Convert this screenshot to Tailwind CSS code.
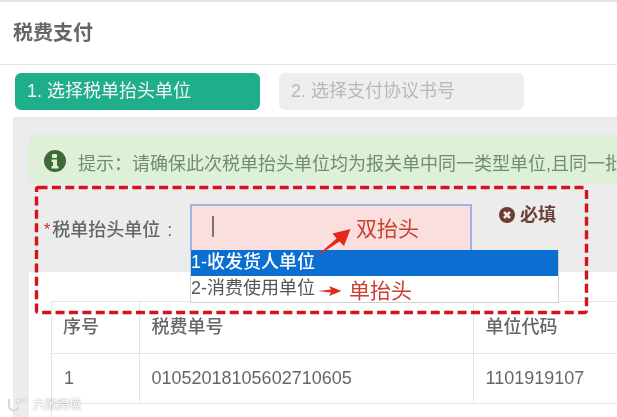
<!DOCTYPE html>
<html lang="zh">
<head>
    <meta charset="UTF-8">
    <title>税费支付</title>
    <script src="https://cdn.jsdelivr.net/npm/@tailwindcss/browser@4"></script>
</head>
<body class="bg-white overflow-hidden font-['Liberation_Sans','Noto_Sans_CJK_SC',sans-serif]">
    <div class="relative w-[617px] h-[417px] overflow-hidden blur-[0.4px]">
        <!-- Header -->
        <div class="h-[65px] border-t-2 border-b border-t-[#e4e4e4] border-b-[#e5e5e5] pl-[13px] flex items-center">
            <h1 class="text-[20px] font-bold text-[#666]">税费支付</h1>
        </div>

        <!-- Steps -->
        <div class="flex gap-[19px] pl-[15px] pt-[8px] h-[52px]">
            <div class="w-[245px] h-[37px] rounded-md bg-[#1fae8c] text-[#f4f4f4] text-[18px] pl-[12px] flex items-center">1. 选择税单抬头单位</div>
            <div class="w-[245px] h-[37px] rounded-md bg-[#eeeeee] text-[#b8b8b8] text-[18px] pl-[12px] flex items-center">2. 选择支付协议书号</div>
        </div>

        <!-- Panel -->
        <div class="ml-[13px] h-[300px] bg-[#ececec] pl-[16px] pt-[17px] flex flex-col">
            <div class="h-[50px] shrink-0 bg-[#dff0d8] rounded-tl-md flex items-center pl-[15px] pt-[10px] text-[18px] text-[#6f8f68] whitespace-nowrap overflow-hidden">
                <svg class="w-[22px] h-[22px] shrink-0 mr-[12px] mb-[6px]" viewBox="0 0 22 22">
                    <circle cx="11" cy="11" r="11" fill="#3d6b35"/>
                    <rect x="8" y="4" width="5" height="4" rx="1" fill="#dff0d8"/>
                    <path d="M7.500 9.500h5.500v6.500h1.500v2.500h-7v-2.500h1.500v-4h-1.500z" fill="#dff0d8"/>
                </svg>
                提示：请确保此次税单抬头单位均为报关单中同一类型单位,且同一批
            </div>

            <!-- Form row -->
            <div class="h-[88px] shrink-0 flex pl-[15px] pt-[20px]">
                <div class="w-[146px] h-[46px] pt-[6px] flex items-center text-[18px] font-medium text-[#666] whitespace-nowrap">
                    <span class="text-[#c0262d] mr-[2px] text-[16px]">*</span>税单抬头单位<span class="ml-[7px]">:</span>
                </div>
                <div class="w-[282px] h-[46px] bg-[#fbdfdf] border-2 border-b-0 border-[#a3b3e3] pl-[20px] pt-[10px]">
                    <div class="w-[2px] h-[21px] bg-[#777]"></div>
                </div>
                <div class="ml-[27px] h-[22px] flex items-center text-[18px] font-bold text-[#6a3f38]">
                    <svg class="w-[16px] h-[16px] mr-[5px]" viewBox="0 0 16 16">
                        <circle cx="8" cy="8" r="8" fill="#6e3b35"/>
                        <path d="M5 5l6 6M11 5l-6 6" stroke="#f0e6e4" stroke-width="2.600"/>
                    </svg>
                    必填
                </div>
            </div>

            <!-- White content with table -->
            <div class="flex-1 bg-white pl-[22px] pt-[29px]">
                <div class="h-full border-l border-[#e5e5e5]">
                    <table class="border-collapse w-[700px] text-[18px] text-[#666] table-fixed">
                        <tbody>
                            <tr class="h-[52px] border-y border-[#e5e5e5] font-medium">
                                <td class="w-[87px] pl-[11px] border-r border-[#e5e5e5]">序号</td>
                                <td class="w-[334px] pl-[12px] border-r border-[#e5e5e5]">税费单号</td>
                                <td class="pl-[12px]">单位代码</td>
                            </tr>
                            <tr class="h-[50px] border-b border-[#e5e5e5]">
                                <td class="pl-[12px] border-r border-[#e5e5e5]">1</td>
                                <td class="pl-[12px] border-r border-[#e5e5e5]">01052018105602710605</td>
                                <td class="pl-[12px]">1101919107</td>
                            </tr>
                        </tbody>
                    </table>
                </div>
            </div>
        </div>

        <!-- Dropdown list -->
        <div class="absolute left-[190px] top-[250px] w-[369px] h-[53px] bg-white border border-[#cfcfcf] border-t-0 text-[18px] leading-[25px] text-[#555]">
            <div class="h-[26px] bg-[#0a6fd0] text-white font-medium whitespace-nowrap">1-收发货人单位</div>
            <div class="h-[26px] whitespace-nowrap">2-消费使用单位</div>
        </div>

        <!-- Annotations -->
        <svg class="absolute left-0 top-0 pointer-events-none" width="617" height="417" viewBox="0 0 617 417">
            <rect x="36.500" y="187.500" width="550" height="125" rx="2" fill="none" stroke="#d3141c" stroke-width="3.400" stroke-dasharray="9 4.400"/>
            <path d="M315 257.500L336.500 238.500L332.500 233.500L350.500 229L344 246L339.500 241.500z" fill="#e5281c"/>
            <path d="M318 291L331 289.500L329 286L341.500 291L329 296L331 292.500z" fill="#e5281c"/>
        </svg>
        <span class="absolute left-[356px] top-[214px] text-[21px] leading-[30px] text-[#c8402e] whitespace-nowrap">双抬头</span>
        <span class="absolute left-[349px] top-[276px] text-[21px] leading-[30px] text-[#c8402e] whitespace-nowrap">单抬头</span>

        <!-- Watermark -->
        <div class="absolute left-[7px] top-[396px] flex items-center gap-[5px] text-[12px] text-white [text-shadow:0_0_2px_#888]">
            <svg class="w-[21px] h-[16px]" viewBox="0 0 21 16">
                <path d="M2 2v7c0 3 3 5 6 4.500c2-.3 3-2 3-4" fill="none" stroke="#d8d8d8" stroke-width="2"/>
                <circle cx="11.500" cy="4" r="2.500" fill="none" stroke="#d8d8d8" stroke-width="1.200"/>
                <circle cx="17.500" cy="3" r="2" fill="none" stroke="#d8d8d8" stroke-width="1.200"/>
            </svg>
            六敞跨境
        </div>
    </div>
</body>
</html>
